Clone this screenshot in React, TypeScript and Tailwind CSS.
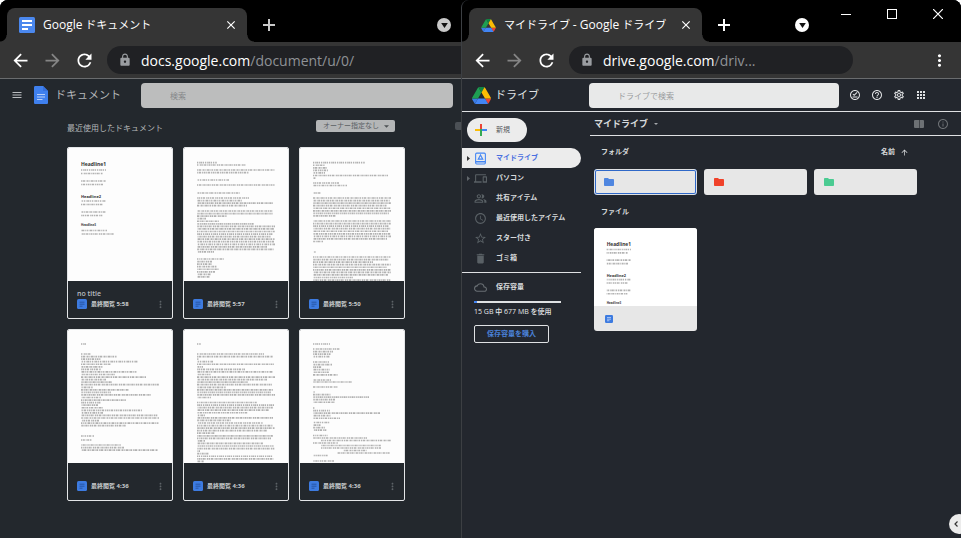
import type { ReactNode } from "react";
import {
  MdAccessTime,
  MdApps,
  MdArrowBack,
  MdArrowForward,
  MdArrowUpward,
  MdClose,
  MdCloudQueue,
  MdDelete,
  MdDevices,
  MdFolder,
  MdHelpOutline,
  MdInfoOutline,
  MdLock,
  MdMenu,
  MdMoreVert,
  MdOutlineOfflinePin,
  MdOutlinePeopleAlt,
  MdOutlineSettings,
  MdRefresh,
  MdStarBorder,
} from "react-icons/md";

type Line = [y: number, length: number, indent?: number];

const block = (start: number, lengths: number[]): Line[] =>
  lengths.map((length, i) => [start + i * 2.56, length] as Line);

const letter: Line[] = [
  [14.7, 20], [17, 49], [22, 78], [24.7, 52], [32, 32], [37, 78], [45, 43],
  ...block(50, [52, 45, 76, 50]),
  ...block(63, [76, 76, 30, 9, 22, 57, 78, 77, 78, 76, 74, 78, 77, 78, 70, 77, 17]),
  ...block(111, [27, 15, 15, 20, 22, 18, 14, 13]),
];

const essay: Line[] = [
  ...block(14.7, [52, 12, 14, 15, 12, 75, 3]),
  [35, 26], [37.5, 34], [45, 8],
  ...block(50, [78, 77, 78, 74, 78, 78, 76, 23]),
  ...block(73, [78, 78, 76, 78, 75, 78, 78, 74, 10]),
  [104, 3],
  ...block(109, [78, 76, 60, 78, 74, 78, 78, 75, 40, 78]),
];

const memo: Line[] = [
  [14, 5],
  ...block(24, [10, 36, 20, 57, 30, 22, 20, 56, 34, 65, 25, 31, 78, 12, 48, 30, 70, 20, 45, 20, 17, 22, 61, 22, 77, 78, 18, 78, 45]),
  [106, 13], [110, 11],
  ...block(115, [40, 43, 77]),
];

const story: Line[] = [
  [14, 4],
  ...block(24, [67, 76, 2, 16, 77, 6, 48, 76, 14, 78, 70, 51, 75, 29, 76, 74, 78, 14]),
  ...block(72.5, [60, 77, 76, 72, 51, 8, 76, 34, 66, 76, 78, 70, 18, 76, 74, 8, 66, 77, 78, 3, 12, 76, 77, 7]),
];

const outline: Line[] = [
  [14, 17],
  ...block(19, [27, 20, 18, 17]),
  ...block(32, [16, 19, 9, 17, 16, 25]),
  [50, 18], [52, 39], [57, 25],
  ...block(62, [2, 18, 56, 22, 22]),
  ...block(78, [2, 17, 67, 18, 27]),
  ...block(92.5, [17, 8, 12, 14]),
  [105.5, 15], [108, 54], [110.5, 70, 8], [113, 25], [115.5, 60, 8], [118, 60, 8],
  [120.5, 24, 30], [123, 53, 24], [125.5, 15], [131, 21],
];

const dashes = [
  "1.300 .7 .8 .5 2.100 .6 1.100 .9",
  "2.300 .6 .7 .8 1.600 .5 1.200 .7",
  "1.700 .8 1 .6 2.600 .7 .6 .5",
  ".9 .6 1.900 .7 1.200 .6 2.200 .9",
];

function Lines({ lines }: { lines: Line[] }) {
  return (
    <>
      {lines.map(([y, length, indent = 0], i) => (
        <line
          key={i}
          x1={13 + indent}
          x2={13 + indent + length}
          y1={y}
          y2={y}
          stroke="#555"
          strokeWidth="1.700"
          strokeOpacity={0.45}
          strokeDasharray={dashes[i % dashes.length]}
          strokeDashoffset={i * 1.3}
        />
      ))}
    </>
  );
}

function HeadlinePage() {
  return (
    <g fontFamily="Open Sans, sans-serif" fontWeight="700" fill="#333">
      <text x="13" y="18" fontSize="5">Headline1</text>
      <Lines lines={[[22, 25], [25.5, 22], [33, 25], [36.5, 22], [53, 25], [56.5, 22], [64, 25], [67.5, 22], [82.5, 26], [86, 33]]} />
      <text x="13" y="50" fontSize="4">Headline2</text>
      <text x="13" y="78" fontSize="3">Headline3</text>
    </g>
  );
}

function DocsTabLogo({ className }: { className: string }) {
  return (
    <svg viewBox="0 0 16 16" className={className} aria-hidden="true">
      <rect width="16" height="16" rx="1.5" fill="#4b88ee" />
      <path d="M3 4h10M3 8h10M3 12h6" stroke="#fff" strokeWidth="1.8" />
    </svg>
  );
}

function DocsLogo() {
  return (
    <svg viewBox="0 0 14 18" className="h-[18px] w-[14px]" aria-hidden="true">
      <path d="M1.300 0H9l5 5v11.700c0 .7-.6 1.300-1.300 1.300H1.300C.6 18 0 17.400 0 16.700V1.300C0 .6.6 0 1.300 0z" fill="#3f80ee" />
      <path d="M9 0l5 5H9z" fill="#3570dc" />
      <path d="M3 8.500h8M3 11h8M3 13.500h5.500" stroke="#b9d0f8" strokeWidth="1.200" />
    </svg>
  );
}

function DriveLogo({ className }: { className: string }) {
  return (
    <svg viewBox="0 0 87.3 78" className={className} aria-hidden="true">
      <path fill="#3a7be6" d="m6.600 66.850 3.850 6.650c.8 1.400 1.950 2.500 3.300 3.300l13.750-23.800h-27.500c0 1.550.4 3.100 1.200 4.500z" />
      <path fill="#1e9e52" d="m43.650 25-13.750-23.800c-1.350.8-2.500 1.900-3.300 3.300l-25.400 44a9.060 9.060 0 0 0 -1.200 4.500h27.500z" />
      <path fill="#ea4335" d="m73.550 76.800c1.350-.8 2.500-1.900 3.300-3.300l1.600-2.750 7.650-13.250c.8-1.400 1.200-2.950 1.200-4.500h-27.502l5.852 11.500z" />
      <path fill="#118443" d="m43.650 25 13.750-23.800c-1.350-.8-2.900-1.200-4.500-1.200h-18.500c-1.600 0-3.150.45-4.500 1.200z" />
      <path fill="#4285f4" d="m59.800 53h-32.300l-13.750 23.800c1.350.8 2.900 1.200 4.500 1.200h50.800c1.600 0 3.150-.45 4.500-1.200z" />
      <path fill="#fbbc04" d="m73.400 26.500-12.700-22c-.8-1.400-1.950-2.500-3.300-3.300l-13.750 23.800 16.150 28h27.450c0-1.550-.4-3.100-1.200-4.500z" />
    </svg>
  );
}

function DocBadge({ className }: { className: string }) {
  return (
    <svg viewBox="0 0 10 10" className={className} aria-hidden="true">
      <rect width="10" height="10" rx="1.500" fill="#3d7be0" />
      <path d="M2.500 3.200h5M2.500 5.200h5M2.500 7.200h3" stroke="currentColor" strokeWidth=".9" />
    </svg>
  );
}

function IconButton({ label, className, children }: { label: string; className: string; children: ReactNode }) {
  return (
    <button type="button" aria-label={label} className={`flex shrink-0 items-center justify-center ${className}`}>
      {children}
    </button>
  );
}

function TabStrip({
  logo,
  title,
  tabClass,
  menuClass,
  tone,
  controls,
}: {
  logo: ReactNode;
  title: ReactNode;
  tabClass: string;
  menuClass: string;
  tone: string;
  controls?: ReactNode;
}) {
  return (
    <div className={`flex h-[42px] bg-black ${tone}`}>
      <span className="h-[7px] w-[7px] shrink-0 self-end bg-[radial-gradient(circle_at_0_0,transparent_6px,#353535_7px)]" />
      <div className={`mt-2 flex shrink-0 items-center rounded-t-lg bg-[#353535] pl-3 pr-2 ${tabClass}`}>
        {logo}
        <span className="min-w-0 flex-1 truncate pl-2 text-[11px] leading-4 text-white">{title}</span>
        <IconButton label="タブを閉じる" className="h-4 w-4 text-white">
          <MdClose className="h-[14px] w-[14px]" />
        </IconButton>
      </div>
      <span className="h-[7px] w-[7px] shrink-0 self-end bg-[radial-gradient(circle_at_100%_0,transparent_6px,#353535_7px)]" />
      <IconButton label="新しいタブ" className="mt-2 h-[34px] w-[30px]">
        <svg viewBox="0 0 12 12" className="h-3 w-3" aria-hidden="true">
          <path d="M6 0v12M0 6h12" stroke="currentColor" strokeWidth="2" />
        </svg>
      </IconButton>
      <IconButton label="タブを検索" className={`ml-auto mt-[18px] h-[14px] w-[14px] rounded-full bg-current ${menuClass}`}>
        <svg viewBox="0 0 8 6" className="h-[5px] w-[7px]" aria-hidden="true">
          <path d="M0 0h8L4 6z" fill="#111" />
        </svg>
      </IconButton>
      {controls}
    </div>
  );
}

function Toolbar({
  host,
  path,
  pillClass,
  children,
}: {
  host: string;
  path: string;
  pillClass: string;
  children?: ReactNode;
}) {
  return (
    <div className="flex h-[37px] items-center border-b border-[#6a6c6e] bg-[#353535] pl-1 text-white">
      <IconButton label="戻る" className="h-7 w-8">
        <MdArrowBack className="h-[21px] w-[21px]" />
      </IconButton>
      <IconButton label="進む" className="h-7 w-8 text-[#858585]">
        <MdArrowForward className="h-[21px] w-[21px]" />
      </IconButton>
      <IconButton label="再読み込み" className="h-7 w-8">
        <MdRefresh className="h-[21px] w-[21px]" />
      </IconButton>
      <button
        type="button"
        aria-label="アドレスバー"
        className={`ml-[7px] flex h-7 min-w-0 flex-1 items-center gap-[9px] overflow-hidden whitespace-nowrap bg-[#202124] pl-[11px] text-left text-[14px] ${pillClass}`}
      >
        <MdLock className="h-[14px] w-[14px] shrink-0 text-[#9a9da1]" />
        <span>
          {host}
          <span className="text-[#8f9296]">{path}</span>
        </span>
      </button>
      {children}
    </div>
  );
}

const recentDocs: { time: string; title?: string; lines?: Line[] }[] = [
  { time: "5:58", title: "no title" },
  { time: "5:57", lines: letter },
  { time: "5:50", lines: essay },
  { time: "4:36", lines: memo },
  { time: "4:36", lines: story },
  { time: "4:36", lines: outline },
];

function DocCard({ time, title, lines }: { time: string; title?: string; lines?: Line[] }) {
  return (
    <article className="flex h-[172px] flex-col overflow-hidden rounded-[2px] border border-[#e4e6e8]">
      <a href="#document" aria-label={title ?? `最終閲覧 ${time}`} className="h-[133px] overflow-hidden bg-[#fdfdfd]">
        <svg viewBox="0 0 104 133" className="h-full w-full" aria-hidden="true">
          {lines ? <Lines lines={lines} /> : <HeadlinePage />}
        </svg>
      </a>
      <div className="flex flex-1 flex-col justify-end pb-[8px] pl-[9px] pr-[5px]">
        {title && <h3 className="text-[7px] font-semibold leading-[9px] text-[#b9bdc0]">{title}</h3>}
        <div className="flex h-3 items-center gap-1 text-[#24519f]">
          <DocBadge className="h-[10px] w-[10px]" />
          <span className="text-[6px] font-bold leading-3 text-[#c9ccce]">最終閲覧 {time}</span>
          <IconButton label="その他の操作" className="ml-auto h-3 w-[14px] text-[#5d6367]">
            <MdMoreVert className="h-[11px] w-[11px]" />
          </IconButton>
        </div>
      </div>
    </article>
  );
}

function DocsWindow() {
  return (
    <section className="flex min-w-0 flex-col overflow-hidden bg-[#23282d]">
      <TabStrip
        logo={<DocsTabLogo className="h-4 w-4 shrink-0" />}
        title={
          <>
            <span className="text-[12px]">Google</span> ドキュメント
          </>
        }
        tabClass="w-60"
        menuClass="mr-[10px]"
        tone="text-[#c9c9c9]"
      />
      <Toolbar host="docs.google.com" path="/document/u/0/" pillClass="rounded-l-full" />
      <header className="flex h-8 items-center pr-2">
        <IconButton label="メインメニュー" className="h-8 w-[34px] text-[#b9bcbf]">
          <MdMenu className="h-3 w-3" />
        </IconButton>
        <DocsLogo />
        <h1 className="w-[93px] shrink-0 pl-[7px] text-[11px] leading-4 text-[#b4b7b9]">ドキュメント</h1>
        <input
          type="search"
          aria-label="検索"
          placeholder="検索"
          className="h-[25px] min-w-0 flex-1 rounded bg-[#bcbdbd] pl-[29px] text-[8px] text-[#444] placeholder:text-[#858789]"
        />
      </header>
      <main className="flex-1 pl-[67px]">
        <div className="mt-[9px] flex h-3 items-center">
          <h2 className="pt-1 text-[8px] leading-3 text-[#b4b7b9]">最近使用したドキュメント</h2>
          <div className="relative ml-auto mr-[60px]">
            <select
              aria-label="オーナー"
              className="block h-3 w-[79px] appearance-none rounded-[2px] bg-[#b4b6b7] pl-[7px] text-[7px] leading-3 text-[#5b6064]"
            >
              <option>オーナー指定なし</option>
            </select>
            <svg viewBox="0 0 6 3" className="pointer-events-none absolute right-[6px] top-[5px] h-[3px] w-[5px]" aria-hidden="true">
              <path d="M0 0h6L3 3z" fill="#4e5255" />
            </svg>
          </div>
          <span className="h-2 w-[6px] shrink-0 rounded-l-[2px] bg-[#4b5055]" />
        </div>
        <div className="mt-[15px] grid grid-cols-3 gap-[10px] pr-14">
          {recentDocs.map((doc, i) => (
            <DocCard key={i} {...doc} />
          ))}
        </div>
      </main>
    </section>
  );
}

function MyDriveIcon({ className }: { className: string }) {
  return (
    <svg viewBox="0 0 12 12" className={className} aria-hidden="true" fill="none" stroke="currentColor">
      <rect x="1.500" y="1" width="9" height="10" rx="1" />
      <path d="M1.500 9h9" strokeWidth="1.500" />
      <path d="M6 2.800 8 6.500H4z" strokeWidth="1.100" />
    </svg>
  );
}

const navIcon = "h-[13px] w-[13px] shrink-0";
const navItems = [
  { label: "マイドライブ", icon: <MyDriveIcon className={navIcon} />, expandable: true, active: true },
  { label: "パソコン", icon: <MdDevices className={navIcon} />, expandable: true },
  { label: "共有アイテム", icon: <MdOutlinePeopleAlt className={navIcon} /> },
  { label: "最近使用したアイテム", icon: <MdAccessTime className={navIcon} /> },
  { label: "スター付き", icon: <MdStarBorder className={navIcon} /> },
  { label: "ゴミ箱", icon: <MdDelete className={navIcon} /> },
];

function Sidebar() {
  return (
    <aside className="w-[119px] shrink-0">
      <button
        type="button"
        className="ml-[5px] mt-[6px] flex h-6 w-[60px] items-center rounded-full bg-[#ececec] pl-2 text-[7px] text-[#55585b]"
      >
        <svg viewBox="0 0 12 12" className="h-3 w-3" aria-hidden="true" strokeWidth="2">
          <path d="M6 0v5" stroke="#ea4335" />
          <path d="M0 6h5" stroke="#fbbc04" />
          <path d="M5 6h7" stroke="#4285f4" />
          <path d="M6 5v7" stroke="#34a853" />
        </svg>
        <span className="pl-[9px]">新規</span>
      </button>
      <nav className="mt-[6px]">
        {navItems.map((item) => (
          <a
            key={item.label}
            href="#drive"
            className={`flex h-5 items-center whitespace-nowrap text-[7px] font-bold ${
              item.active ? "rounded-r-full bg-[#ececec] text-[#4a6fe0]" : "text-[#d6d9db]"
            }`}
          >
            <span className="flex w-[12px] shrink-0 justify-end pr-1">
              {item.expandable && (
                <svg viewBox="0 0 3 5" className={`h-[5px] w-[3px] ${item.active ? "text-[#333]" : "text-[#62676c]"}`} aria-hidden="true">
                  <path d="M0 0l3 2.500L0 5z" fill="currentColor" />
                </svg>
              )}
            </span>
            <span className={item.active ? "text-[#4285f4]" : "text-[#596065]"}>{item.icon}</span>
            <span className="pl-[9px]">{item.label}</span>
          </a>
        ))}
      </nav>
      <div className="mt-1 border-t border-[#dfe1e3] pl-3 pt-2">
        <a href="#storage" className="flex h-3 items-center gap-[9px] text-[7px] font-bold leading-3 text-[#d6d9db]">
          <MdCloudQueue className="h-[13px] w-[13px] text-[#686e73]" />
          保存容量
        </a>
        <div className="mt-2 h-[2px] w-[87px] bg-[#dfe1e3]">
          <div className="h-full w-[3px] bg-[#4285f4]" />
        </div>
        <p className="mt-[3px] whitespace-nowrap text-[7px] font-medium leading-3 text-[#e6e8ea]">15 GB 中 677 MB を使用</p>
        <button
          type="button"
          className="mt-[6px] h-[18px] w-[75px] rounded-[2px] border border-[#dfe1e3] text-center text-[7px] font-bold leading-4 text-[#4a80d6]"
        >
          保存容量を購入
        </button>
      </div>
    </aside>
  );
}

const folders = [
  { name: "青いフォルダ", color: "text-[#4f86e0]", frame: "border-2 border-[#2f68c8] outline outline-1 -outline-offset-1 outline-[#dfe1e3]" },
  { name: "赤いフォルダ", color: "text-[#f0422a]", frame: "border-2 border-[#e7e7e7]" },
  { name: "緑のフォルダ", color: "text-[#4bcb92]", frame: "border-2 border-[#e7e7e7]" },
];

function DriveContent() {
  return (
    <main className="ml-[9px] min-w-0 flex-1">
      <div className="flex h-6 items-center border-b border-[#dfe1e3] pl-1 text-[#6d7175]">
        <button type="button" className="flex items-center gap-[6px] text-[9px] font-semibold leading-4 text-[#d6d9db]">
          マイドライブ
          <svg viewBox="0 0 6 3" className="h-[2px] w-1 text-[#a5a8ab]" aria-hidden="true">
            <path d="M0 0h6L3 3z" fill="currentColor" />
          </svg>
        </button>
        <IconButton label="レイアウトを切り替え" className="ml-auto h-6 w-6">
          <svg viewBox="0 0 10 8" className="h-2 w-[10px]" aria-hidden="true">
            <rect width="10" height="8" rx="1" fill="currentColor" />
            <path d="M5.500 0v8" stroke="#22272c" strokeWidth=".6" />
          </svg>
        </IconButton>
        <IconButton label="詳細を表示" className="mr-[6px] h-6 w-6">
          <MdInfoOutline className="h-3 w-3" />
        </IconButton>
      </div>
      <div className="pl-1 pr-11 text-[7px] font-bold text-[#d6d9db]">
        <div className="mt-[10px] flex h-3 items-center justify-between pl-[7px] pr-2">
          <h2 className="leading-3">フォルダ</h2>
          <button type="button" className="flex items-center gap-[5px] leading-3">
            名前
            <MdArrowUpward className="h-[9px] w-[9px]" />
          </button>
        </div>
        <div className="mt-[11px] grid grid-cols-3 gap-[7px]">
          {folders.map((folder) => (
            <button
              key={folder.name}
              type="button"
              aria-label={folder.name}
              className={`flex h-[26px] items-center rounded-[3px] bg-[#e7e7e7] pl-[7px] ${folder.frame}`}
            >
              <MdFolder className={`h-3 w-3 ${folder.color}`} />
            </button>
          ))}
        </div>
        <h2 className="mt-[11px] pl-[7px] leading-3">ファイル</h2>
        <div className="mt-[10px] grid grid-cols-3 gap-[7px]">
          <a href="#file" aria-label="no title" className="block overflow-hidden rounded-[3px] bg-[#e7e7e7]">
            <span className="block h-[78px] overflow-hidden bg-white">
              <svg viewBox="0 0 106 80" className="h-full w-full" aria-hidden="true">
                <HeadlinePage />
              </svg>
            </span>
            <span className="flex h-[25px] items-center pl-[11px] text-[#d3e1fb]">
              <DocBadge className="h-2 w-2" />
            </span>
          </a>
        </div>
      </div>
    </main>
  );
}

function WindowControls() {
  return (
    <div className="flex text-white">
      <IconButton label="最小化" className="h-7 w-[46px]">
        <svg viewBox="0 0 10 10" className="h-[10px] w-[10px]" aria-hidden="true">
          <path d="M0 5.500h10" stroke="currentColor" />
        </svg>
      </IconButton>
      <IconButton label="最大化" className="h-7 w-[46px]">
        <svg viewBox="0 0 10 10" className="h-[10px] w-[10px]" aria-hidden="true">
          <rect x=".5" y=".5" width="9" height="9" fill="none" stroke="currentColor" />
        </svg>
      </IconButton>
      <IconButton label="閉じる" className="h-7 w-[46px]">
        <svg viewBox="0 0 10 10" className="h-[10px] w-[10px]" aria-hidden="true">
          <path d="M0 0l10 10M10 0L0 10" stroke="currentColor" strokeWidth="1.200" />
        </svg>
      </IconButton>
    </div>
  );
}

function DriveWindow() {
  return (
    <section className="relative flex min-w-0 flex-col overflow-hidden rounded-tl-lg border-l border-[#3c3f43] bg-[#23272e]">
      <TabStrip
        logo={<DriveLogo className="h-[13px] w-[15px] shrink-0" />}
        title={
          <>
            マイドライブ <span className="text-[12px]">- Google</span> ドライブ
          </>
        }
        tabClass="w-[233px]"
        menuClass="mr-[14px]"
        tone="text-white"
        controls={<WindowControls />}
      />
      <Toolbar host="drive.google.com" path="/driv..." pillClass="mr-[74px] rounded-full">
        <IconButton label="メニュー" className="mr-[10px] h-7 w-6">
          <MdMoreVert className="h-[19px] w-[19px]" />
        </IconButton>
      </Toolbar>
      <header className="flex h-[33px] items-center border-b border-[#dfe1e3] pr-[29px] text-[#dfe1e3]">
        <div className="flex w-[127px] shrink-0 items-center gap-[4px] pl-[10px]">
          <DriveLogo className="h-[17px] w-[19px]" />
          <h1 className="text-[11px] leading-4">ドライブ</h1>
        </div>
        <input
          type="search"
          aria-label="ドライブで検索"
          placeholder="ドライブで検索"
          className="mr-[5px] h-[25px] min-w-0 flex-1 rounded bg-[#e8e9e9] pl-[29px] text-[8px] text-[#444] placeholder:text-[#999b9d]"
        />
        <IconButton label="オフラインで使用可" className="h-6 w-[22px]">
          <MdOutlineOfflinePin className="h-3 w-3" />
        </IconButton>
        <IconButton label="サポート" className="h-6 w-[22px]">
          <MdHelpOutline className="h-3 w-3" />
        </IconButton>
        <IconButton label="設定" className="h-6 w-[22px]">
          <MdOutlineSettings className="h-3 w-3" />
        </IconButton>
        <IconButton label="アプリ" className="h-6 w-[22px]">
          <MdApps className="h-3 w-3" />
        </IconButton>
      </header>
      <div className="flex flex-1">
        <Sidebar />
        <DriveContent />
      </div>
      <button
        type="button"
        aria-label="サイドパネルを表示"
        className="absolute -right-2 bottom-1 flex h-5 w-5 items-center rounded-full bg-[#ececec] pl-[5px] text-[#333]"
      >
        <svg viewBox="0 0 4 6" className="h-[6px] w-1" aria-hidden="true">
          <path d="M3.500.5 1 3l2.500 2.500" fill="none" stroke="currentColor" strokeWidth="1.200" />
        </svg>
      </button>
    </section>
  );
}

export default function App() {
  return (
    <div className="grid min-h-screen grid-cols-[minmax(0,461fr)_minmax(0,500fr)] overflow-hidden rounded-t-lg bg-black font-['Open_Sans','Noto_Sans_CJK_JP',sans-serif]">
      <DocsWindow />
      <DriveWindow />
    </div>
  );
}
